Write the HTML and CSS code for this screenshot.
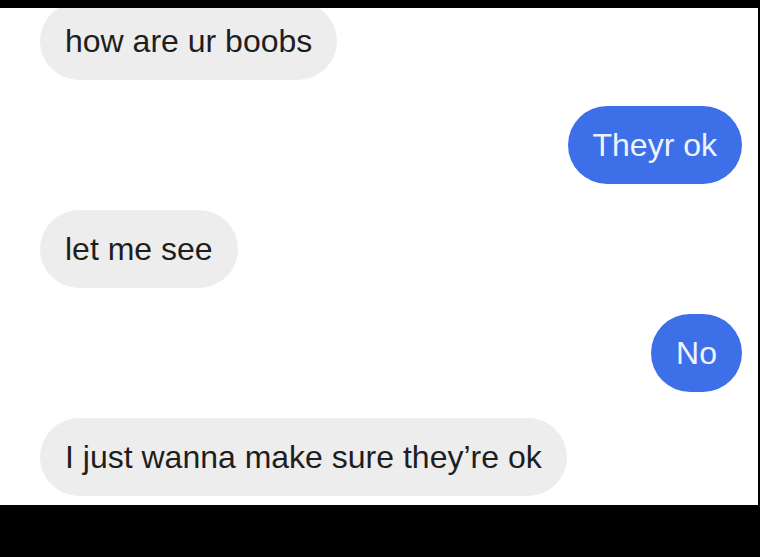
FILE: index.html
```html
<!DOCTYPE html>
<html>
<head>
<meta charset="utf-8">
<link rel="stylesheet" href="styles.css">
</head>
<body>
<div class="frame">
  <div class="panel">
    <div class="chat">
      <div class="msg in">how are ur boobs</div>
      <div class="msg out">Theyr ok</div>
      <div class="msg in">let me see</div>
      <div class="msg out">No</div>
      <div class="msg in">I just wanna make sure they’re ok</div>
    </div>
  </div>
</div>
</body>
</html>
```

FILE: styles.css
```css
html, body {
  margin: 0;
  padding: 0;
  background: #000;
}
.frame {
  width: 760px;
  height: 557px;
  background: #000;
  padding-top: 8px;
  box-sizing: border-box;
}
.panel {
  width: 758px;
  height: 497px;
  background: #fff;
  overflow: hidden;
}
.chat {
  display: flex;
  flex-direction: column;
  gap: 26px;
  margin-top: -6px;
  padding: 0 16px 0 40px;
}
.msg {
  height: 78px;
  line-height: 78px;
  padding: 0 25px;
  border-radius: 39px;
  font-family: "Liberation Sans", Arial, sans-serif;
  font-size: 32px;
  white-space: nowrap;
}
.msg.in {
  align-self: flex-start;
  background: #ededed;
  color: #1e1e1e;
}
.msg.out {
  align-self: flex-end;
  background: #3d6fe9;
  color: #eef3ff;
}
```
